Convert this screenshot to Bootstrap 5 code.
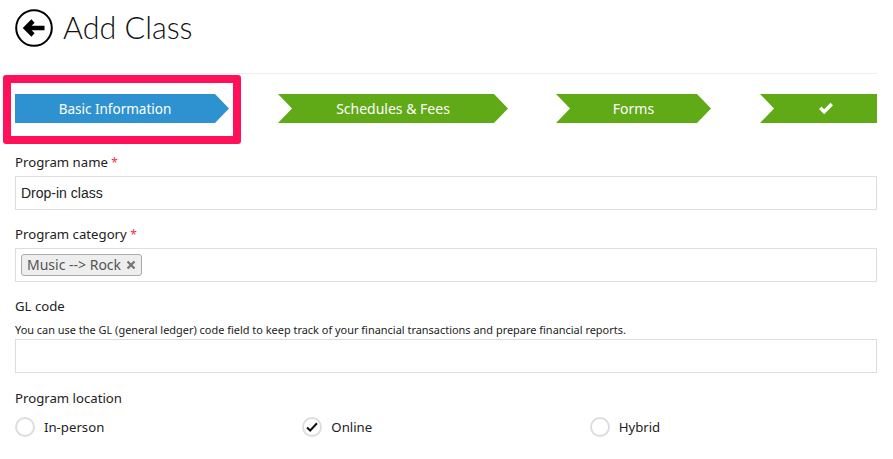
<!DOCTYPE html>
<html lang="en">
<head>
  <meta charset="UTF-8">
  <title>Add Class</title>
  <link href="https://cdn.jsdelivr.net/npm/bootstrap@5.3.3/dist/css/bootstrap.min.css" rel="stylesheet">
  <style>
    body { background: #fff; color: #222; font-family: "Noto Sans", "Open Sans", sans-serif; font-size: 13.2px; overflow: hidden; }
    .page-wrap { position: relative; padding: 0 16px 0 15px; }
    .page-head { height: 73px; padding-bottom: 18px; gap: 10px; }
    .page-head h1 { font-family: Lato, sans-serif; font-weight: 300; font-size: 30.5px; line-height: 34px; margin: 0 0 2px; color: #111; }
    .head-rule { height: 1px; background: #eee; }
    .steps { margin-top: 20px; margin-bottom: 29px; height: 29px; }
    .step-item { height: 29px; color: #fff; font-size: 14px; line-height: 29px; text-align: center; background: #60a917; }
    .step-first { width: 214px; background: #2e92d0; clip-path: polygon(0 0, 200px 0, 100% 50%, 200px 100%, 0 100%); padding-right: 14px; font-size: 13.5px; line-height: 30px; }
    .step-two { width: 230px; margin-left: 49px; clip-path: polygon(0 0, 216px 0, 100% 50%, 216px 100%, 0 100%, 14px 50%); }
    .step-three { width: 155px; margin-left: 48px; clip-path: polygon(0 0, 141px 0, 100% 50%, 141px 100%, 0 100%, 14px 50%); }
    .step-last { width: 117px; margin-left: 49px; padding-left: 14px; clip-path: polygon(0 0, 100% 0, 100% 100%, 0 100%, 14px 50%); }
    .step-last svg { vertical-align: -1px; }
    .pink-frame { position: absolute; left: 3px; top: 75px; width: 238px; height: 69px; border: 8px solid #ff1058; border-radius: 3px; }
    .field-label { display: block; line-height: 20px; margin-bottom: 4px; }
    .req { color: #f0304a; font-size: 12px; line-height: 1; }
    .form-control.field-box { height: 34px; border: 1px solid #ddd; border-radius: 0; padding: 0 5px; color: #222; font-family: "Liberation Sans", sans-serif; font-size: 14px; margin-bottom: 14px; }
    .form-control.field-gl { margin-bottom: 15px; }
    .tag-box { height: 34px; border: 1px solid #ddd; padding: 5px; margin-bottom: 14px; }
    .tag-chip { height: 22px; padding: 0 5px; background: #eee; border: 1px solid #aaa; border-radius: 3px; color: #555; font-size: 14px; line-height: 20px; gap: 5px; }
    .help-line { font-size: 10.95px; line-height: 19px; }
    .radio-dot { width: 20px; height: 20px; border: 2px solid #ddd; border-radius: 50%; margin-right: 9px; }
    .radio-row { margin-top: 9px; line-height: 20px; }
    .radio-cell { width: 287.5px; }
  </style>
</head>
<body>
<div class="page-wrap">
  <div class="page-head d-flex align-items-center">
    <svg width="38" height="38" viewBox="0 0 38 38">
      <circle cx="19" cy="19" r="17.8" fill="none" stroke="#000" stroke-width="2"/>
      <path d="M29.5 19 H11 M18 12 L11 19 L18 26" fill="none" stroke="#000" stroke-width="4.6"/>
    </svg>
    <h1>Add Class</h1>
  </div>
  <div class="head-rule"></div>

  <div class="steps d-flex">
    <div class="step-item step-first">Basic Information</div>
    <div class="step-item step-two">Schedules &amp; Fees</div>
    <div class="step-item step-three">Forms</div>
    <div class="step-item step-last">
      <svg width="16" height="13" viewBox="0 0 16 13"><path d="M1 7 L3.5 4.5 L6.2 7.2 L12.5 0.8 L15 3.3 L6.2 12.2 Z" fill="#fff"/></svg>
    </div>
  </div>
  <div class="pink-frame"></div>

  <form>
    <label class="field-label">Program name <span class="req">*</span></label>
    <input type="text" class="form-control field-box" value="Drop-in class">

    <label class="field-label">Program category <span class="req">*</span></label>
    <div class="tag-box d-flex">
      <span class="tag-chip d-inline-flex align-items-center">Music --&gt; Rock
        <svg width="10" height="10" viewBox="0 0 10 10"><path d="M1.5 1.5 L8.5 8.5 M8.5 1.5 L1.5 8.5" stroke="#777" stroke-width="2.4"/></svg>
      </span>
    </div>

    <label class="field-label">GL code</label>
    <div class="help-line">You can use the GL (general ledger) code field to keep track of your financial transactions and prepare financial reports.</div>
    <input type="text" class="form-control field-box field-gl">

    <label class="field-label mb-0">Program location</label>
    <div class="radio-row d-flex">
      <div class="radio-cell d-flex align-items-center"><span class="radio-dot"></span>In-person</div>
      <div class="radio-cell d-flex align-items-center">
        <span class="radio-dot d-flex align-items-center justify-content-center">
          <svg width="12" height="10" viewBox="0 0 12 10"><path d="M1 5.5 L4.2 8.5 L11 1.2" fill="none" stroke="#111" stroke-width="2"/></svg>
        </span>Online
      </div>
      <div class="radio-cell d-flex align-items-center"><span class="radio-dot"></span>Hybrid</div>
    </div>
  </form>
</div>
<script src="https://cdn.jsdelivr.net/npm/bootstrap@5.3.3/dist/js/bootstrap.bundle.min.js"></script>
</body>
</html>
